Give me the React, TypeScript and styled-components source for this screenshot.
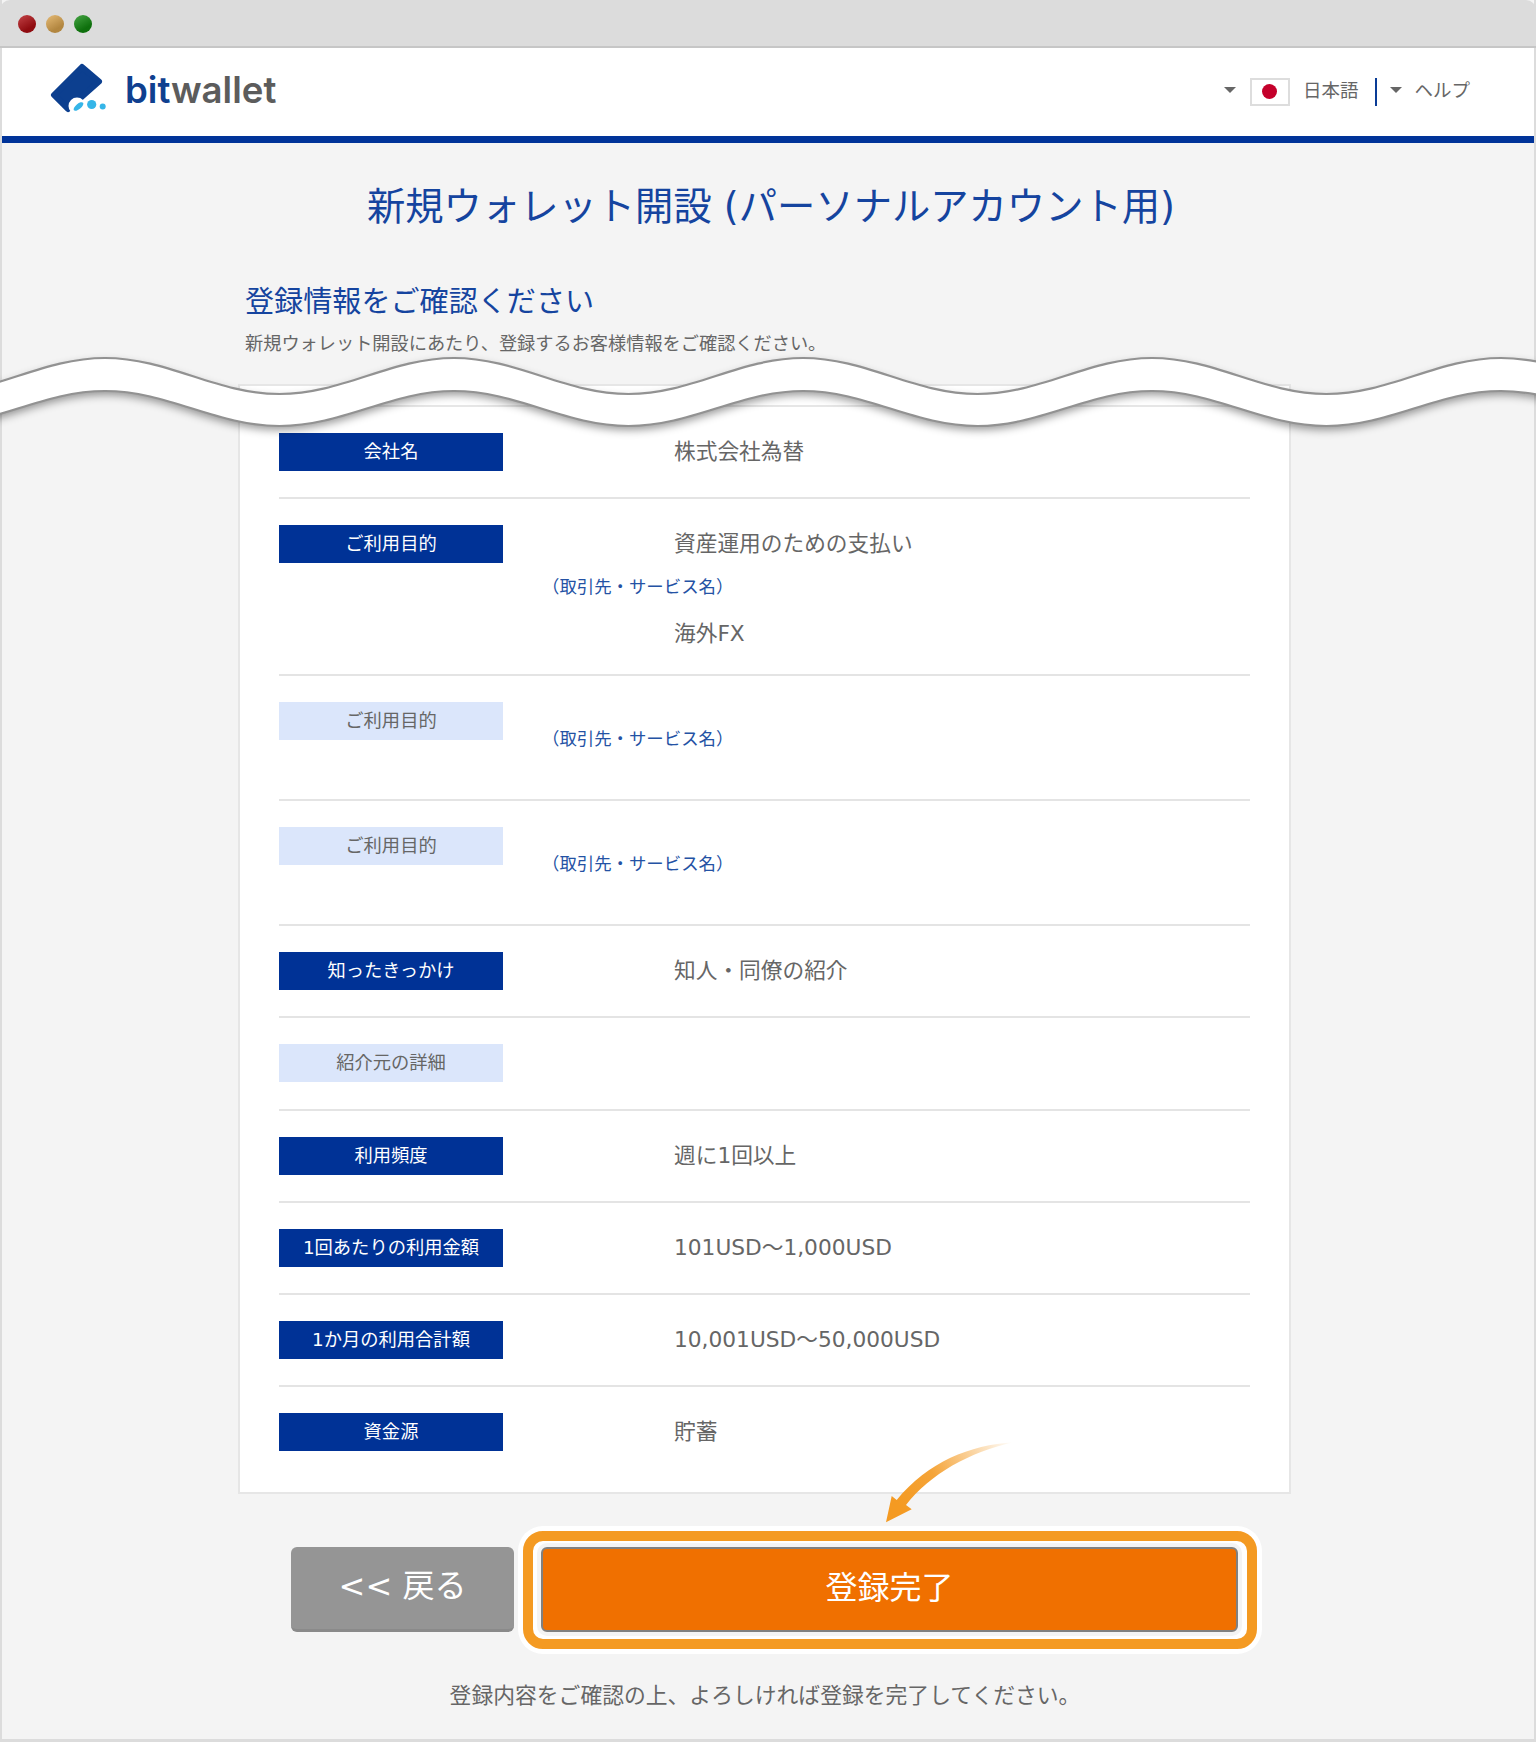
import React from 'react';
import styled, { createGlobalStyle } from 'styled-components';

const WAVE_PERIOD = 349;
const WAVE_CREST = 105;

const waveSegments = (mid: number, amp: number, reverse = false) => {
  const half = WAVE_PERIOD / 2;
  const points: [number, number][] = [];
  for (let i = 0; i < 13; i++) {
    points.push([WAVE_CREST - WAVE_PERIOD + i * half, i % 2 === 0 ? mid - amp : mid + amp]);
  }
  const list = reverse ? points.reverse() : points;
  let d = '';
  for (let i = 1; i < list.length; i++) {
    const [x0, y0] = list[i - 1];
    const [x1, y1] = list[i];
    const dx = (x1 - x0) * 0.3642;
    d += `C${x0 + dx} ${y0} ${x1 - dx} ${y1} ${x1} ${y1}`;
  }
  return { d, start: list[0] };
};

const topWave = waveSegments(43, 18);
const bottomWave = waveSegments(75.5, 17.5);
const bottomBack = waveSegments(75.5, 17.5, true);

const Wave = () => (
  <WaveSvg viewBox="0 0 1536 110" width="1536" height="110">
    <path
      className="band"
      d={`M${topWave.start[0]} ${topWave.start[1]}${topWave.d}L${bottomBack.start[0]} ${bottomBack.start[1]}${bottomBack.d}Z`}
      fill="#fff"
    />
    <path d={`M${topWave.start[0]} ${topWave.start[1]}${topWave.d}`} fill="none" stroke="#929292" strokeWidth="2.2" />
    <path d={`M${bottomWave.start[0]} ${bottomWave.start[1]}${bottomWave.d}`} fill="none" stroke="#929292" strokeWidth="2.2" />
  </WaveSvg>
);

const LogoMark = () => (
  <svg width="60" height="52" viewBox="0 0 60 52">
    <path
      d="M32 4 L49 18.5 L18 46 L4 32 Z"
      fill="#0c3f8f"
      stroke="#0c3f8f"
      strokeWidth="6"
      strokeLinejoin="round"
    />
    <circle cx="27" cy="43" r="8.5" fill="#fff" />
    <ellipse cx="28.5" cy="43.5" rx="6" ry="2.6" fill="#35b5e8" transform="rotate(-40 28.5 43.5)" />
    <circle cx="41.7" cy="41.5" r="4.6" fill="#35b5e8" />
    <circle cx="52.7" cy="43.5" r="3" fill="#35b5e8" />
  </svg>
);

const Arrow = () => (
  <ArrowSvg width="140" height="90" viewBox="0 0 140 90">
    <defs>
      <linearGradient id="arrowFade" x1="133" y1="4" x2="20" y2="70" gradientUnits="userSpaceOnUse">
        <stop offset="0" stopColor="#f49a22" stopOpacity="0" />
        <stop offset="0.65" stopColor="#f49a22" stopOpacity="0.9" />
        <stop offset="1" stopColor="#f49a22" />
      </linearGradient>
    </defs>
    <path
      d="M133.3 4.3C90 7 48 24 16.7 62L11.7 58L6 84.3L31.7 71.3L26 67C50 36 90 14 133.3 4.3Z"
      fill="url(#arrowFade)"
    />
  </ArrowSvg>
);

const App = () => (
  <>
    <GlobalStyle />
    <Frame>
      <Chrome>
        <Dot $color="#b30f14" />
        <Dot $color="#dfa850" />
        <Dot $color="#128c10" />
      </Chrome>
      <Header>
        <Logo>
          <LogoMark />
          <LogoText>
            <b>bit</b>wallet
          </LogoText>
        </Logo>
        <Nav>
          <Caret />
          <Flag />
          <NavText>日本語</NavText>
          <NavDivider />
          <Caret $tight />
          <NavText>ヘルプ</NavText>
        </Nav>
      </Header>
      <Main>
        <PageTitle>新規ウォレット開設 (パーソナルアカウント用)</PageTitle>
        <SectionTitle>登録情報をご確認ください</SectionTitle>
        <Lead>新規ウォレット開設にあたり、登録するお客様情報をご確認ください。</Lead>
        <Card>
          <CardTop />
          <Row>
            <Label>会社名</Label>
            <Details>
              <Value>株式会社為替</Value>
            </Details>
          </Row>
          <Row $height={177}>
            <Label>ご利用目的</Label>
            <Details>
              <Value>資産運用のための支払い</Value>
              <SubLabel $top={10}>（取引先・サービス名）</SubLabel>
              <Value $top={14}>海外FX</Value>
            </Details>
          </Row>
          <Row $height={125}>
            <Label $light>ご利用目的</Label>
            <Details>
              <SubLabel $top={23}>（取引先・サービス名）</SubLabel>
            </Details>
          </Row>
          <Row $height={125}>
            <Label $light>ご利用目的</Label>
            <Details>
              <SubLabel $top={23}>（取引先・サービス名）</SubLabel>
            </Details>
          </Row>
          <Row>
            <Label>知ったきっかけ</Label>
            <Details>
              <Value>知人・同僚の紹介</Value>
            </Details>
          </Row>
          <Row $height={93}>
            <Label $light>紹介元の詳細</Label>
          </Row>
          <Row>
            <Label>利用頻度</Label>
            <Details>
              <Value>週に1回以上</Value>
            </Details>
          </Row>
          <Row>
            <Label>1回あたりの利用金額</Label>
            <Details>
              <Value>101USD～1,000USD</Value>
            </Details>
          </Row>
          <Row>
            <Label>1か月の利用合計額</Label>
            <Details>
              <Value>10,001USD～50,000USD</Value>
            </Details>
          </Row>
          <Row $last>
            <Label>資金源</Label>
            <Details>
              <Value>貯蓄</Value>
            </Details>
          </Row>
        </Card>
        <Actions>
          <BackButton>&lt;&lt; 戻る</BackButton>
          <Highlight>
            <Arrow />
            <SubmitButton>登録完了</SubmitButton>
          </Highlight>
        </Actions>
        <Note>登録内容をご確認の上、よろしければ登録を完了してください。</Note>
      </Main>
      <Wave />
    </Frame>
  </>
);

export default App;

// css

const GlobalStyle = createGlobalStyle`
  html, body {
    margin: 0;
    padding: 0;
    background: #fff;
  }

  * {
    box-sizing: border-box;
  }

  body {
    font-family: "DejaVu Sans", "Noto Sans CJK JP", "Noto Sans", sans-serif;
    font-weight: 400;
    color: #666;
  }
`;

const Frame = styled.div`
  position: relative;
  width: 1536px;
  height: 1742px;
  border: solid #dcdcdc;
  border-width: 0 2px 3px;
  background: #f4f4f4;
`;

const Chrome = styled.div`
  display: flex;
  align-items: center;
  gap: 10px;
  height: 48px;
  margin: 0 -2px;
  padding: 2px 18px 0;
  border-bottom: 2px solid #c6c6c6;
  border-radius: 10px 10px 0 0;
  background: #dcdcdc;
`;

const Dot = styled.span<{ $color: string }>`
  width: 18px;
  height: 18px;
  border-radius: 50%;
  background: linear-gradient(150deg, rgba(255, 255, 255, 0.22), rgba(0, 0, 0, 0.2) 70%), ${(p) => p.$color};
`;

const Header = styled.header`
  display: flex;
  align-items: center;
  justify-content: space-between;
  height: 95px;
  padding: 0 64px 7px 48px;
  border-bottom: 7px solid #003399;
  background: #fff;
`;

const Logo = styled.div`
  display: flex;
  align-items: center;
  gap: 15px;
`;

const LogoText = styled.span`
  padding-top: 4px;
  font-family: Inter, "Open Sans", sans-serif;
  font-size: 36.6px;
  font-weight: 600;
  line-height: 1;
  color: #5c5c5c;

  b {
    font-weight: 600;
    color: #0f408f;
  }
`;

const Nav = styled.nav`
  display: flex;
  align-items: center;
  padding-top: 4px;
`;

const Caret = styled.span<{ $tight?: boolean }>`
  position: relative;
  top: -1px;
  width: 0;
  height: 0;
  margin-right: ${(p) => (p.$tight ? 12 : 14)}px;
  border: solid transparent;
  border-width: 6px 6.5px 0;
  border-top-color: #666;
`;

const Flag = styled.span`
  position: relative;
  top: 1px;
  width: 40px;
  height: 28px;
  margin-right: 13px;
  border: 2px solid #ddd;
  background: #fff;

  &::after {
    content: '';
    position: absolute;
    top: 4.5px;
    left: 10.5px;
    width: 15px;
    height: 15px;
    border-radius: 50%;
    background: #c4002b;
  }
`;

const NavText = styled.span`
  font-size: 18.5px;
  line-height: 28px;
`;

const NavDivider = styled.span`
  position: relative;
  top: 1px;
  width: 2px;
  height: 28px;
  margin: 0 13px 0 17px;
  background: #0a3c96;
`;

const Main = styled.main`
  padding-top: 34px;
`;

const PageTitle = styled.h1`
  margin: 0;
  padding-left: 6px;
  font-size: 38.3px;
  font-weight: 400;
  line-height: 60px;
  text-align: center;
  color: #15449f;
`;

const SectionTitle = styled.h2`
  margin: 45px 0 0 243px;
  font-size: 29.1px;
  font-weight: 400;
  line-height: 40px;
  color: #15449f;
`;

const Lead = styled.p`
  margin: 8px 0 0 243px;
  font-size: 18.2px;
  line-height: 28px;
`;

const Card = styled.section`
  width: 1053px;
  height: 1110px;
  margin: 26px 0 0 236px;
  padding: 0 39px;
  border: 2px solid #e6e6e6;
  background: #fff;
`;

const CardTop = styled.div`
  height: 21px;
  margin: 0 -39px;
  border-bottom: 2px solid #e6e6e6;
`;

const Row = styled.div<{ $height?: number; $last?: boolean }>`
  display: flex;
  align-items: flex-start;
  height: ${(p) => p.$height ?? 92}px;
  padding-top: 26px;
  border-bottom: ${(p) => (p.$last ? 'none' : '2px solid #e4e4e4')};
`;

const Label = styled.div<{ $light?: boolean }>`
  flex: none;
  width: 224px;
  height: 38px;
  font-size: 18.3px;
  line-height: 38px;
  text-align: center;
  background: ${(p) => (p.$light ? '#dbe6fb' : '#003296')};
  color: ${(p) => (p.$light ? '#666' : '#fff')};
`;

const Details = styled.div`
  display: flex;
  flex-direction: column;
  padding-left: 39px;
`;

const Value = styled.div<{ $top?: number }>`
  margin-top: ${(p) => p.$top ?? 0}px;
  padding-left: 132px;
  font-size: 21.7px;
  line-height: 38px;
`;

const SubLabel = styled.div<{ $top: number }>`
  margin-top: ${(p) => p.$top}px;
  font-size: 17.4px;
  line-height: 28px;
  color: #2452a4;
`;

const Actions = styled.div`
  display: flex;
  align-items: flex-start;
  margin: 37px 0 0 289px;
`;

const BackButton = styled.button`
  width: 223px;
  height: 85px;
  margin: 16px 9px 0 0;
  padding: 0 0 10px;
  border: 0;
  border-bottom: 3px solid #8a8a8a;
  border-radius: 6px;
  background: #959595;
  color: #fff;
  font-family: inherit;
  font-size: 32px;
  font-weight: 400;
`;

const Highlight = styled.div`
  position: relative;
  width: 734px;
  height: 118px;
  padding: 6px 0 0 8px;
  border: 10px solid #f49a22;
  border-radius: 20px;
  background: #fff;
  box-shadow: 0 0 0 5px #fff;
`;

const SubmitButton = styled.button`
  width: 697px;
  height: 85px;
  padding: 0 0 10px;
  border: 2px solid #808080;
  border-radius: 6px;
  background: #f07000;
  color: #fff;
  font-family: inherit;
  font-size: 32px;
  font-weight: 400;
  box-shadow: 0 0 0 4px #f4f4f4;
`;

const ArrowSvg = styled.svg`
  position: absolute;
  top: -103px;
  left: 347px;
`;

const Note = styled.p`
  margin: 32px 0 0;
  padding-right: 6px;
  font-size: 21.8px;
  line-height: 30px;
  text-align: center;
`;

const WaveSvg = styled.svg`
  position: absolute;
  top: 333px;
  left: -2px;

  .band {
    filter: drop-shadow(0 4px 4px rgba(0, 0, 0, 0.4));
  }
`;
